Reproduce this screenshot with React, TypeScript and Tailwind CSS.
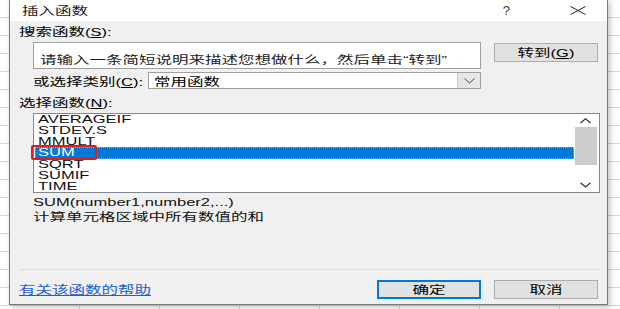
import type { ReactNode } from 'react';

// glyphs in the shot are stretched sideways, so scale text spans horizontally
function W({ children, className = '' }: { children: ReactNode; className?: string }) {
  return <span className={`inline-block origin-left scale-x-[1.5] whitespace-nowrap ${className}`}>{children}</span>;
}

function Btn({ label, focused }: { label: ReactNode; focused?: boolean }) {
  return (
    <div
      className={`w-[104px] h-[19px] flex items-center justify-center bg-[#e1e1e1] ${
        focused ? 'border-2 border-[#0078d7]' : 'border border-[#adadad]'
      }`}
    >
      <span className="inline-block origin-center scale-x-[1.5] whitespace-nowrap text-[11px] leading-[12px] text-black">{label}</span>
    </div>
  );
}

const functions = ['AVERAGEIF', 'STDEV.S', 'MMULT', 'SUM', 'SQRT', 'SUMIF', 'TIME'];

export default function App() {
  return (
    <div className="relative w-[620px] h-[309px] overflow-hidden bg-white bg-[repeating-linear-gradient(to_bottom,transparent_0,transparent_17px,#d6d6d6_17px,#d6d6d6_18px),repeating-linear-gradient(to_right,transparent_0,transparent_79px,#d6d6d6_79px,#d6d6d6_80px)] font-['Liberation_Sans','Noto_Sans_CJK_SC',sans-serif] text-black">
      {/* dialog over the sheet */}
      <div className="absolute left-[9px] top-[-1px] w-[599px] h-[306px] border border-[#7a7a7a] bg-[#f0f0f0] shadow-[2px_2px_6px_rgba(0,0,0,0.25)] flex flex-col">
        {/* title bar */}
        <div className="h-[21px] bg-white flex items-center pl-[12px] shrink-0">
          <W className="text-[11px] leading-[12px] text-[#222]">插入函数</W>
          <div className="flex-1" />
          <span className="text-[13px] leading-[12px] text-[#333] mr-[60px]">?</span>
          <svg width="16" height="9" viewBox="0 0 16 9" className="mr-[21px]">
            <path d="M0.5 0.5 L15.5 8.5 M15.5 0.5 L0.5 8.5" stroke="#222" strokeWidth="1" fill="none" />
          </svg>
        </div>

        <div className="flex flex-col pl-[9px] pr-[8px]">
          <div className="mt-[5px] h-[12px] flex items-center">
            <W className="text-[11px] leading-[12px]">搜索函数(<u>S</u>):</W>
          </div>

          <div className="mt-[4px] flex items-start gap-[13px]">
            <div className="ml-[14px] w-[448px] h-[27px] bg-white border border-[#a0a0a0] pl-[6px] pt-[4px]">
              <W className="text-[11px] leading-[12px] text-[#222]">请输入一条简短说明来描述您想做什么，然后单击“转到”</W>
            </div>
            <div className="mt-[1px]">
              <Btn label={<>转到(<u>G</u>)</>} />
            </div>
          </div>

          <div className="mt-[3px] flex items-center ml-[14px] h-[17px]">
            <div className="w-[115px]">
              <W className="text-[11px] leading-[12px]">或选择类别(<u>C</u>):</W>
            </div>
            <div className="w-[333px] h-[17px] bg-white border border-[#a0a0a0] flex items-center">
              <div className="flex-1 pl-[5px]">
                <W className="text-[11px] leading-[12px]">常用函数</W>
              </div>
              <div className="w-[23px] h-full bg-[#e6e6e6] border-l border-[#c8c8c8] flex items-center justify-center">
                <svg width="11" height="6" viewBox="0 0 11 6">
                  <path d="M0.5 0.5 L5.5 5 L10.5 0.5" stroke="#444" strokeWidth="1" fill="none" />
                </svg>
              </div>
            </div>
          </div>

          <div className="mt-[8px] h-[12px] flex items-center">
            <W className="text-[11px] leading-[12px]">选择函数(<u>N</u>):</W>
          </div>

          {/* function list */}
          <div className="relative mt-[4px] ml-[14px] w-[567px] h-[80px] bg-white border border-[#828790] flex">
            <div className="flex-1 flex flex-col pl-[1px]">
              {functions.map((f) => (
                <div
                  key={f}
                  className={`h-[11.3px] flex items-center pl-[3px] ${
                    f === 'SUM' ? 'bg-[#0078d7] text-white outline-1 outline-dotted outline-[#e8a050] -outline-offset-1' : 'text-[#111]'
                  }`}
                >
                  <W className="text-[11px] leading-[11px]">{f}</W>
                </div>
              ))}
            </div>
            <div className="w-[23px] mr-[2px] flex flex-col items-center">
              <svg width="11" height="6" viewBox="0 0 11 6" className="mt-[4px]">
                <path d="M0.5 5 L5.5 0.8 L10.5 5" stroke="#333" strokeWidth="1.2" fill="none" />
              </svg>
              <div className="mt-[3px] w-[22px] h-[38px] bg-[#cdcdcd]" />
              <div className="flex-1" />
              <svg width="11" height="6" viewBox="0 0 11 6" className="mb-[4px]">
                <path d="M0.5 0.8 L5.5 5 L10.5 0.8" stroke="#333" strokeWidth="1.2" fill="none" />
              </svg>
            </div>
            {/* red highlight drawn over SUM */}
            <div className="absolute left-[-3px] top-[31px] w-[66px] h-[15px] border-2 border-[#e31b1b] rounded-[2px]" />
          </div>

          <div className="mt-[2px] ml-[14px] h-[14px] flex items-center">
            <W className="text-[11px] leading-[12px] text-[#111]">SUM(number1,number2,...)</W>
          </div>
          <div className="mt-[1px] ml-[14px] h-[14px] flex items-center">
            <W className="text-[11px] leading-[12px] text-[#111]">计算单元格区域中所有数值的和</W>
          </div>

          <div className="mt-[45px] h-px bg-[#dcdcdc]" />

          <div className="mt-[10px] flex items-center">
            <W className="text-[11px] leading-[12px] text-[#1a5fd0] underline">有关该函数的帮助</W>
            <div className="flex-1" />
            <Btn label="确定" focused />
            <div className="w-[13px]" />
            <Btn label="取消" />
            <div className="w-[1px]" />
          </div>
        </div>
      </div>
    </div>
  );
}
